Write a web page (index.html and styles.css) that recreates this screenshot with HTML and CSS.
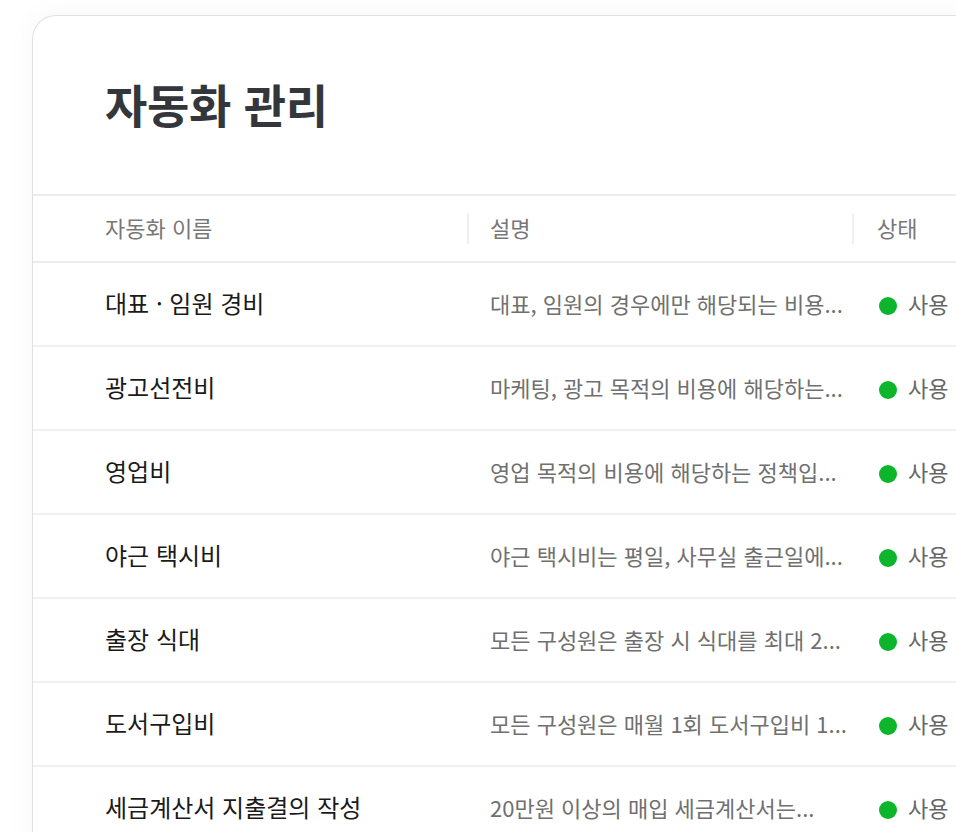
FILE: index.html
```html
<!DOCTYPE html>
<html lang="ko">
<head>
    <meta charset="UTF-8">
    <meta name="viewport" content="width=device-width, initial-scale=1.0">
    <title>자동화 관리</title>
    <link rel="stylesheet" href="styles.css">
</head>
<body>
    <div class="page">
        <div class="card">
            <div class="card-header">
                <h1>자동화 관리</h1>
            </div>

            <table class="rule-table">
                <colgroup>
                    <col class="col-name">
                    <col class="col-desc">
                    <col class="col-status">
                </colgroup>
                <thead>
                    <tr>
                        <th>자동화 이름</th>
                        <th class="with-divider">설명</th>
                        <th class="with-divider">상태</th>
                    </tr>
                </thead>
                <tbody>
                    <tr>
                        <td class="name">대표 · 임원 경비</td>
                        <td class="desc">대표, 임원의 경우에만 해당되는 비용...</td>
                        <td class="status"><span class="dot"></span>사용</td>
                    </tr>
                    <tr>
                        <td class="name">광고선전비</td>
                        <td class="desc">마케팅, 광고 목적의 비용에 해당하는...</td>
                        <td class="status"><span class="dot"></span>사용</td>
                    </tr>
                    <tr>
                        <td class="name">영업비</td>
                        <td class="desc">영업 목적의 비용에 해당하는 정책입...</td>
                        <td class="status"><span class="dot"></span>사용</td>
                    </tr>
                    <tr>
                        <td class="name">야근 택시비</td>
                        <td class="desc">야근 택시비는 평일, 사무실 출근일에...</td>
                        <td class="status"><span class="dot"></span>사용</td>
                    </tr>
                    <tr>
                        <td class="name">출장 식대</td>
                        <td class="desc">모든 구성원은 출장 시 식대를 최대 2...</td>
                        <td class="status"><span class="dot"></span>사용</td>
                    </tr>
                    <tr>
                        <td class="name">도서구입비</td>
                        <td class="desc">모든 구성원은 매월 1회 도서구입비 1...</td>
                        <td class="status"><span class="dot"></span>사용</td>
                    </tr>
                    <tr>
                        <td class="name">세금계산서 지출결의 작성</td>
                        <td class="desc">20만원 이상의 매입 세금계산서는...</td>
                        <td class="status"><span class="dot"></span>사용</td>
                    </tr>
                </tbody>
            </table>
        </div>
    </div>
</body>
</html>
```

FILE: styles.css
```css
* {
    box-sizing: border-box;
    margin: 0;
    padding: 0;
    font-family: "Noto Sans CJK KR", "Noto Sans", sans-serif;
}

html, body {
    height: 100%;
    overflow: hidden;
}

body {
    background: #ffffff;
}

.page {
    padding: 15px 0 0 32px;
}

.card {
    width: 1000px;
    background: #ffffff;
    border: 1px solid #e0e0e0;
    border-bottom: none;
    border-radius: 24px 24px 0 0;
    box-shadow: 0 0 30px rgba(0, 0, 0, 0.04);
}

.card-header {
    height: 180px;
    display: flex;
    align-items: center;
    padding: 0 72px 5px;
    border-bottom: 2px solid #ececec;
}

h1 {
    font-size: 46px;
    font-weight: 700;
    color: #33373c;
    letter-spacing: -0.3px;
}

.rule-table {
    width: 100%;
    border-collapse: collapse;
    table-layout: fixed;
}

.col-name {
    width: 434px;
}

.col-desc {
    width: 385px;
}

th {
    height: 66px;
    padding-bottom: 3px;
    text-align: left;
    font-size: 22px;
    font-weight: 400;
    color: #787878;
    border-bottom: 2px solid #ececec;
    position: relative;
}

th:first-child,
td:first-child {
    padding-left: 72px;
}

th.with-divider,
td.desc {
    padding-left: 23px;
}

th:last-child,
td.status {
    padding-left: 25px;
}

th.with-divider::before {
    content: "";
    position: absolute;
    left: 0;
    top: 17px;
    width: 2px;
    height: 31px;
    background: #f0f0f0;
}

td {
    height: 84px;
    padding-bottom: 3px;
    border-bottom: 2px solid #f1f1f1;
    white-space: nowrap;
    overflow: hidden;
}

.name {
    font-size: 24px;
    color: #1a1a1a;
}

.desc {
    font-size: 22px;
    color: #707070;
}

.status {
    font-size: 22px;
    color: #666666;
}

.dot {
    display: inline-block;
    width: 18px;
    height: 18px;
    border-radius: 50%;
    background: #0db52a;
    margin: 0 11px 0 2px;
    vertical-align: -2px;
}
```
